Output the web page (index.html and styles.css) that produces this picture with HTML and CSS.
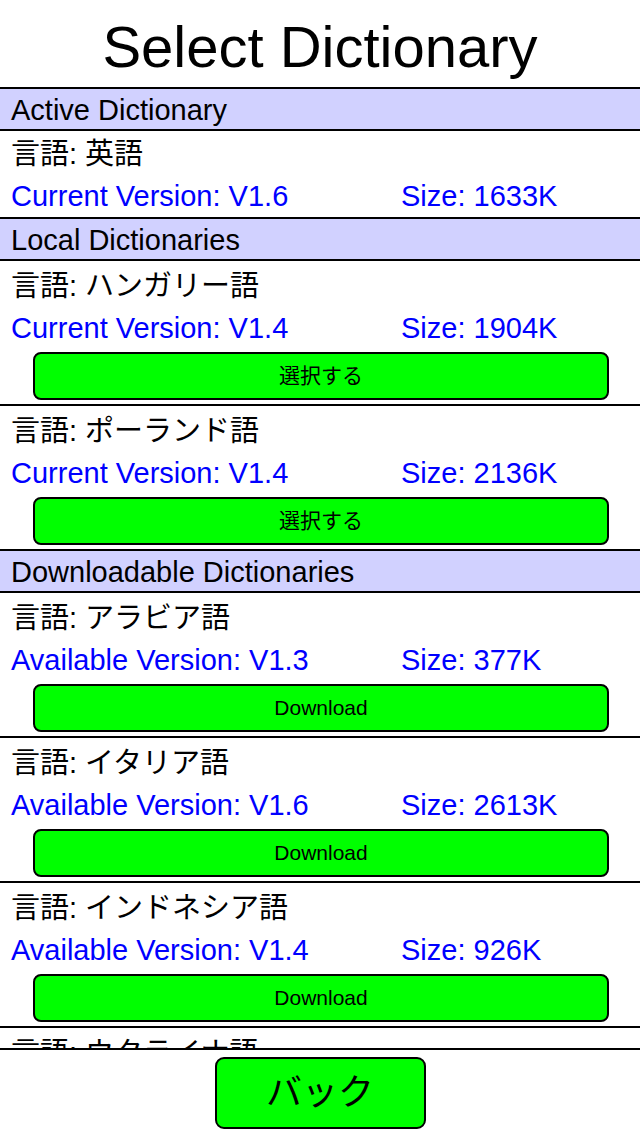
FILE: index.html
```html
<!DOCTYPE html>
<html lang="ja">
<head>
    <meta charset="UTF-8">
    <meta name="viewport" content="width=device-width, initial-scale=1.0">
    <title>Select Dictionary</title>
    <link rel="stylesheet" href="styles.css">
</head>
<body>

<div class="screen">
    <header class="title">Select Dictionary</header>

    <div class="list">
        <div class="section">Active Dictionary</div>
        <div class="entry plain">
            <div class="lang">言語: 英語</div>
            <div class="meta"><span>Current Version: V1.6</span><span>Size: 1633K</span></div>
        </div>

        <div class="section">Local Dictionaries</div>
        <div class="entry">
            <div class="lang">言語: ハンガリー語</div>
            <div class="meta"><span>Current Version: V1.4</span><span>Size: 1904K</span></div>
            <button class="action">選択する</button>
        </div>
        <div class="entry">
            <div class="lang">言語: ポーランド語</div>
            <div class="meta"><span>Current Version: V1.4</span><span>Size: 2136K</span></div>
            <button class="action">選択する</button>
        </div>

        <div class="section">Downloadable Dictionaries</div>
        <div class="entry">
            <div class="lang">言語: アラビア語</div>
            <div class="meta"><span>Available Version: V1.3</span><span>Size: 377K</span></div>
            <button class="action">Download</button>
        </div>
        <div class="entry">
            <div class="lang">言語: イタリア語</div>
            <div class="meta"><span>Available Version: V1.6</span><span>Size: 2613K</span></div>
            <button class="action">Download</button>
        </div>
        <div class="entry">
            <div class="lang">言語: インドネシア語</div>
            <div class="meta"><span>Available Version: V1.4</span><span>Size: 926K</span></div>
            <button class="action">Download</button>
        </div>
        <div class="entry">
            <div class="lang">言語: ウクライナ語</div>
            <div class="meta"><span>Available Version: V1.2</span><span>Size: 1210K</span></div>
            <button class="action">Download</button>
        </div>
    </div>

    <footer class="footer">
        <button class="back">バック</button>
    </footer>
</div>

</body>
</html>
```

FILE: styles.css
```css
body, html {
    margin: 0;
    padding: 0;
    background-color: #ffffff;
}

.screen {
    display: flex;
    flex-direction: column;
    width: 640px;
    height: 1136px;
    font-family: "Liberation Sans", "Noto Sans CJK JP", sans-serif;
    color: #000000;
}

.title {
    height: 81px;
    padding-top: 6px;
    line-height: 81px;
    font-size: 58px;
    text-align: center;
    border-bottom: 2px solid #000;
}

.list {
    flex: 1;
    overflow: hidden;
    border-bottom: 2px solid #000;
}

.section {
    height: 37px;
    padding: 3px 0 0 11px;
    line-height: 37px;
    font-size: 29px;
    background-color: #d1d1ff;
    border-bottom: 2px solid #000;
}

.entry {
    display: flex;
    flex-direction: column;
    padding: 4px 0 0 11px;
    border-bottom: 2px solid #000;
}

.entry.plain {
    padding-top: 2px;
}

.lang {
    height: 42px;
    line-height: 42px;
    font-size: 29px;
}

.meta {
    display: grid;
    grid-template-columns: 390px 1fr;
    height: 42px;
    line-height: 42px;
    font-size: 29px;
    color: #0000ff;
}

.action {
    width: 576px;
    height: 48px;
    margin: 3px 0 4px 22px;
    padding: 0;
    line-height: 44px;
    font-family: "Liberation Sans", "Noto Sans CJK JP", sans-serif;
    font-size: 21px;
    color: #000;
    background-color: #00ff00;
    border: 2px solid #000;
    border-radius: 8px;
}

.footer {
    display: flex;
    justify-content: center;
    padding: 7px 0 0 0;
    flex: 0 0 79px;
}

.back {
    width: 211px;
    height: 72px;
    padding: 0;
    line-height: 68px;
    font-family: "Liberation Sans", "Noto Sans CJK JP", sans-serif;
    font-size: 36px;
    color: #000;
    background-color: #00ff00;
    border: 2px solid #000;
    border-radius: 9px;
}
```
